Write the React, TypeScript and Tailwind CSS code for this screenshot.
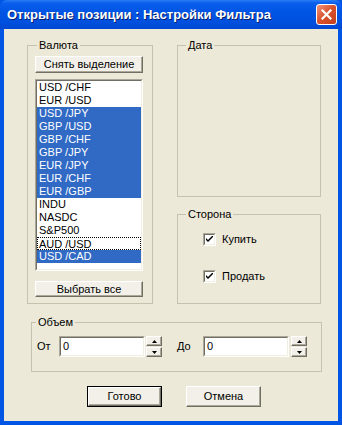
import React from "react";

const raised =
  "border border-t-white border-l-white border-r-[#716F64] border-b-[#716F64] shadow-[inset_-1px_-1px_0_#ACA899] bg-[#F2F0E8]";

function Sunken({ className, children }: { className: string; children?: React.ReactNode }) {
  return (
    <div className={`border border-t-[#ACA899] border-l-[#ACA899] border-r-white border-b-white ${className}`}>
      <div className="w-full h-full border border-t-[#716F64] border-l-[#716F64] border-r-[#F1EFE2] border-b-[#F1EFE2] bg-white overflow-hidden">
        {children}
      </div>
    </div>
  );
}

function Group({ label, className, labelLeft, children }: { label: string; className: string; labelLeft: string; children?: React.ReactNode }) {
  return (
    <div className={`relative border border-[#C5C2B2] shrink-0 ${className}`}>
      <span className={`absolute -top-[7px] ${labelLeft} px-[2px] bg-[#ECE9D8] leading-[13px] text-black`}>{label}</span>
      {children}
    </div>
  );
}

function Check({ label }: { label: string }) {
  return (
    <div className="flex items-center h-[13px]">
      <div className="w-[13px] h-[13px] border border-t-[#ACA899] border-l-[#ACA899] border-r-white border-b-white">
        <div className="w-full h-full border border-t-[#716F64] border-l-[#716F64] border-r-[#F1EFE2] border-b-[#F1EFE2] bg-white flex items-center justify-center">
          <svg width="7" height="7" viewBox="0 0 7 7">
            <path d="M0 2 L0 4 L2 6 L7 1 L7 -1 L2 4 Z" fill="#000" />
          </svg>
        </div>
      </div>
      <span className="ml-[6px] leading-[13px]">{label}</span>
    </div>
  );
}

function Spin() {
  return (
    <div className="flex flex-col w-[16px] h-[21px] gap-[1px]">
      <div className={`${raised} h-[10px] flex items-center justify-center`}>
        <svg width="5" height="3" viewBox="0 0 5 3"><path d="M2.5 0 L5 3 L0 3 Z" fill="#000" /></svg>
      </div>
      <div className={`${raised} h-[10px] flex items-center justify-center`}>
        <svg width="5" height="3" viewBox="0 0 5 3"><path d="M0 0 L5 0 L2.5 3 Z" fill="#000" /></svg>
      </div>
    </div>
  );
}

const items: { t: string; sel?: boolean; focus?: boolean }[] = [
  { t: "USD /CHF" },
  { t: "EUR /USD" },
  { t: "USD /JPY", sel: true },
  { t: "GBP /USD", sel: true },
  { t: "GBP /CHF", sel: true },
  { t: "GBP /JPY", sel: true },
  { t: "EUR /JPY", sel: true },
  { t: "EUR /CHF", sel: true },
  { t: "EUR /GBP", sel: true },
  { t: "INDU" },
  { t: "NASDC" },
  { t: "S&P500" },
  { t: "AUD /USD", focus: true },
  { t: "USD /CAD", sel: true },
];

export default function App() {
  return (
    <div
      className="w-[342px] h-[425px] flex flex-col bg-[#0055E5] text-[11px] text-black overflow-hidden"
      style={{ fontFamily: '"Liberation Sans", Arial, sans-serif' }}
    >
      {/* Title bar */}
      <div className="h-[29px] shrink-0 flex items-center pl-[7px] pr-[5px] bg-[linear-gradient(#2A7FF5_0px,#0A5EEC_3px,#0055E5_12px,#0050DE_22px,#0047D2_29px)] rounded-t-[7px]">
        <span className="flex-1 text-white font-bold text-[13px] leading-[16px] [text-shadow:1px_1px_0_#0A1E6A]">
          Открытые позиции : Настройки Фильтра
        </span>
        <div className="w-[21px] h-[21px] rounded-[3px] border border-white bg-[linear-gradient(135deg,#F0957A,#D9502C_50%,#C2401C)] flex items-center justify-center">
          <svg width="11" height="11" viewBox="0 0 11 11">
            <path d="M1.5 1.5 L9.5 9.5 M9.5 1.5 L1.5 9.5" stroke="#fff" strokeWidth="2.2" strokeLinecap="square" />
          </svg>
        </div>
      </div>

      {/* Client */}
      <div className="flex-1 mx-[4px] mb-[4px] bg-[#ECE9D8] flex flex-col">
        <div className="flex mt-[16px] ml-[23px]">
          <Group label="Валюта" className="w-[126px] h-[259px] pl-[7px] pt-[10px]" labelLeft="left-[9px]">
            <div className={`${raised} w-[108px] h-[17px] flex items-center justify-center leading-[13px]`}>
              Снять выделение
            </div>
            <Sunken className="w-[108px] h-[192px] mt-[6px]">
              <div className="flex flex-col">
                {items.map((it) => (
                  <div
                    key={it.t}
                    className={`h-[13px] leading-[13px] whitespace-nowrap ${
                      it.sel ? "bg-[#316AC5] text-white pl-[2px]" : it.focus ? "border border-dotted border-black pl-[1px] leading-[11px]" : "pl-[2px]"
                    }`}
                  >
                    {it.t}
                  </div>
                ))}
              </div>
            </Sunken>
            <div className={`${raised} w-[108px] h-[16px] mt-[10px] flex items-center justify-center leading-[13px]`}>
              Выбрать все
            </div>
          </Group>

          <div className="flex flex-col ml-[24px]">
            <Group label="Дата" className="w-[144px] h-[152px]" labelLeft="left-[8px]" />
            <Group label="Сторона" className="w-[144px] h-[90px] mt-[17px] pl-[25px] pt-[18px] flex flex-col gap-[24px]" labelLeft="left-[8px]">
              <Check label="Купить" />
              <Check label="Продать" />
            </Group>
          </div>
        </div>

        <Group label="Объем" className="w-[291px] h-[50px] mt-[18px] ml-[27px] pl-[5px] pt-[13px] flex items-center" labelLeft="left-[4px]">
          <div className="flex items-center self-start">
            <span className="w-[22px] leading-[13px]">От</span>
            <Sunken className="w-[86px] h-[21px]">
              <div className="pl-[2px] pt-[2px] leading-[13px]">0</div>
            </Sunken>
            <div className="ml-[1px]"><Spin /></div>
            <span className="w-[26px] ml-[15px] leading-[13px]">До</span>
            <Sunken className="w-[86px] h-[21px]">
              <div className="pl-[2px] pt-[2px] leading-[13px]">0</div>
            </Sunken>
            <div className="ml-[2px]"><Spin /></div>
          </div>
        </Group>

        <div className="flex mt-[14px] ml-[83px]">
          <div className="w-[75px] h-[21px] border border-black">
            <div className={`${raised} w-full h-full flex items-center justify-center leading-[13px]`}>Готово</div>
          </div>
          <div className={`${raised} w-[75px] h-[21px] ml-[24px] flex items-center justify-center leading-[13px]`}>Отмена</div>
        </div>
      </div>
    </div>
  );
}
